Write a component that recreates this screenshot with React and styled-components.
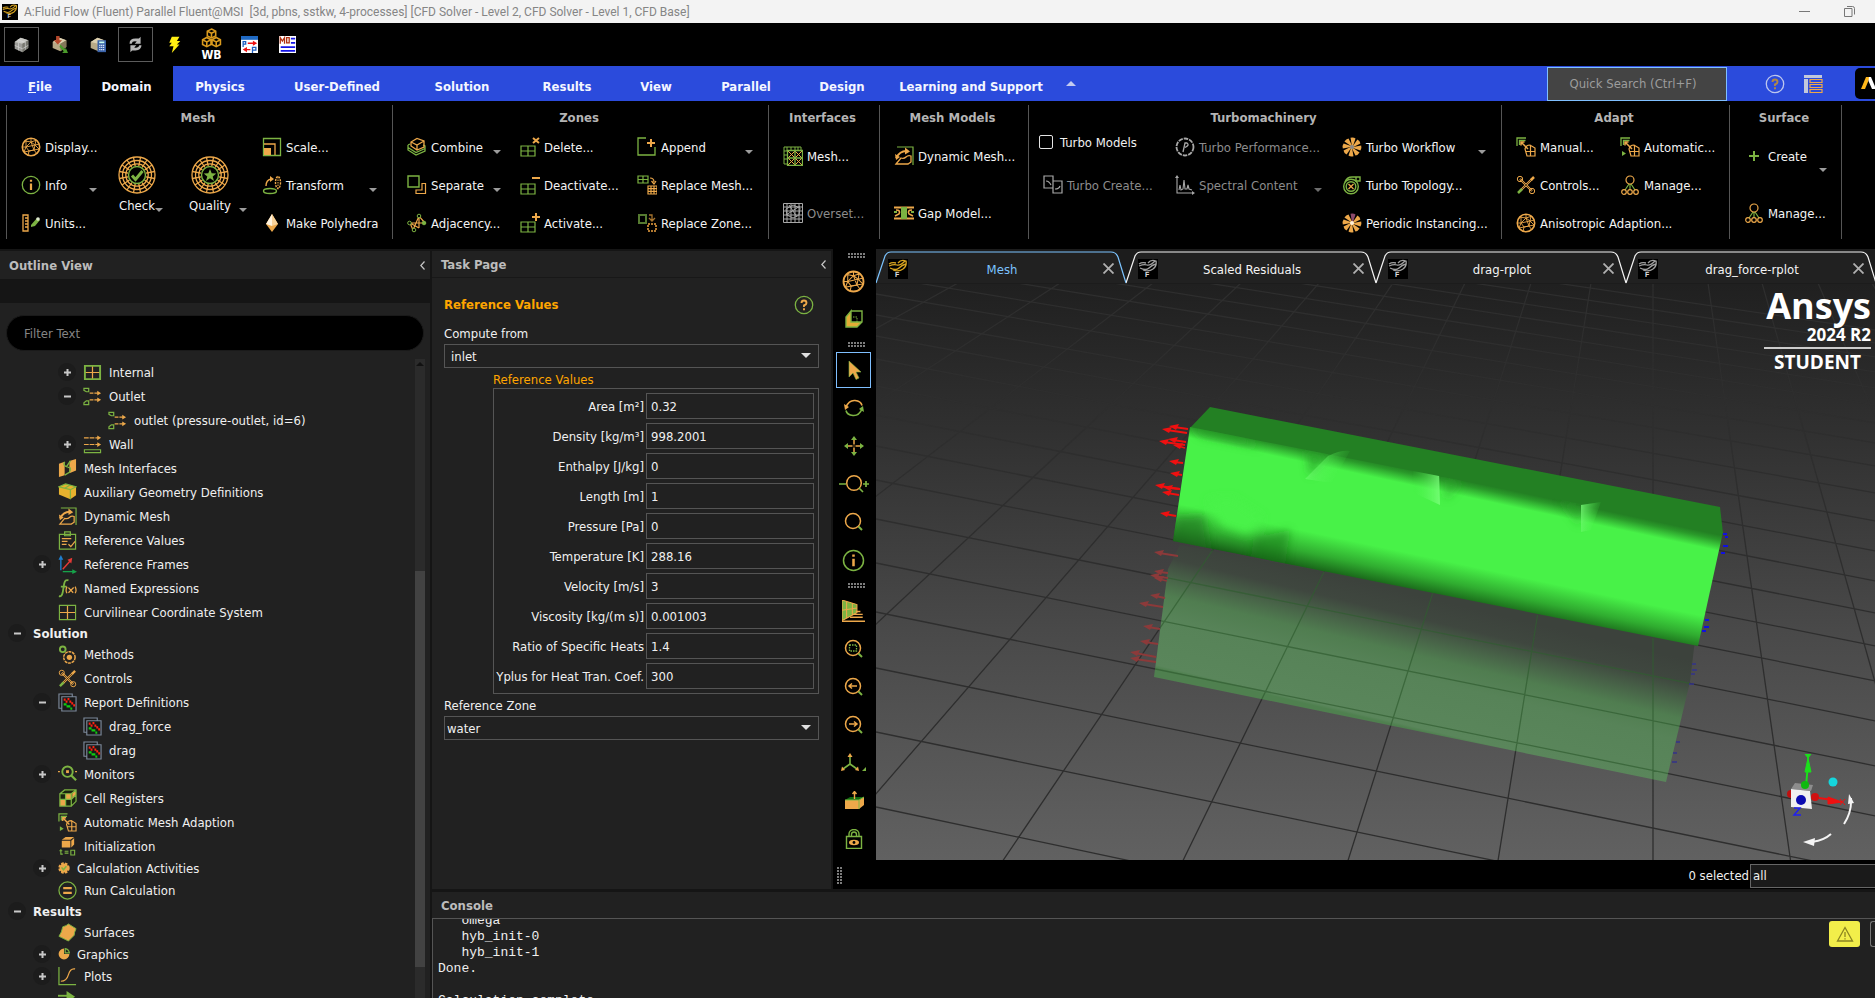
import React from "react";
import styled, { createGlobalStyle } from "styled-components";

const O = "#eda84a";
const G = "#7cb342";
const GREY = "#a8a8a8";
const UI_FONT = '"DejaVu Sans Condensed", "Noto Sans", sans-serif';

const GlobalStyle = createGlobalStyle`
  *, *::before, *::after { box-sizing: border-box; }
  html, body { margin: 0; background: #151515; }
  body { font-family: ${UI_FONT}; font-size: 13px; color: #f0f0f0; }
  button, input, select { font: inherit; color: inherit; margin: 0; }
  button { background: none; border: 0; padding: 0; text-align: left; }
`;

/* ---------- icons ---------- */

const spokes = (cx, cy, r1, r2, n, off = 0) =>
  Array.from({ length: n }, (_, i) => {
    const a = ((i + off) * 2 * Math.PI) / n;
    return `M${(cx + r1 * Math.cos(a)).toFixed(1)} ${(cy + r1 * Math.sin(a)).toFixed(1)}L${(cx + r2 * Math.cos(a)).toFixed(1)} ${(cy + r2 * Math.sin(a)).toFixed(1)}`;
  }).join("");

const Blades = ({ odd }) => (
  <>
    {Array.from({ length: 8 }, (_, i) => (
      <path
        key={i}
        d="M10 9 L8.500 .8 Q11.500 0 13.500 1.600 L11 9Z"
        fill={odd && i === 0 ? "#8d4a6c" : O}
        transform={`rotate(${i * 45} 10 10)`}
      />
    ))}
    <circle cx="10" cy="10" r="2" fill={odd ? "#fff0d8" : "#8a8a8a"} />
  </>
);

const Web = ({ children }) => (
  <>
    <g stroke={O} strokeWidth="1.300" fill="none">
      <circle cx="19" cy="19" r="18" />
      <circle cx="19" cy="19" r="14.500" />
      <circle cx="19" cy="19" r="11.200" />
      <path d={spokes(19, 19, 9, 18, 16, 0.5)} />
    </g>
    <circle cx="19" cy="19" r="8.500" fill="#000" stroke={G} strokeWidth="1.400" />
    {children}
  </>
);

const Grid4 = ({ x, y, w, h, c = G }) => (
  <path
    d={`M${x} ${y}h${w}v${h}h${-w}zM${x + w / 2} ${y}v${h}M${x} ${y + h / 2}h${w}`}
    stroke={c}
    strokeWidth="1.200"
    fill="none"
  />
);

const Lens = ({ children }) => (
  <>
    <circle cx="9" cy="9" r="7.500" stroke={O} strokeWidth="1.500" fill="none" />
    <path d="M14.500 14.500L18 18" stroke={G} strokeWidth="2" />
    {children}
  </>
);

const Flow = () => (
  <>
    <path d="M1 1.500h5v3.500h-2.500l-2.500-1.500zM1 18.500h5v-4h-2.500l-2.500 2z" stroke={G} fill="none" strokeWidth="1.300" />
    <path d="M7 6.500h9M7 13.500h9" stroke={O} strokeDasharray="4 1" strokeWidth="1.300" />
    <path d="M15 4l4 2.500-4 2.500zM15 11l4 2.500-4 2.500z" fill={O} />
  </>
);

const Adapt = ({ play }) => (
  <>
    <path d="M1 9V1h9M3.500 8V3.500h6" stroke={G} strokeWidth="1.300" fill="none" />
    <path d="M5 5l7 7M5 8.500V5h3.500" stroke={O} strokeWidth="1.500" fill="none" />
    <path d="M9 12q1-4 5-4l5 3v8H11zM14.500 8v11M10 14.500h9" stroke={O} strokeWidth="1.200" fill="none" />
    {play && <path d="M2 14l4 2.500-4 2.500z" fill={G} />}
  </>
);

const Tools = () => (
  <>
    <path d="M4 4l12 12M16 4L4 16" stroke={O} strokeWidth="2.200" />
    <path d="M4 4l12 12M16 4L4 16" stroke="#2a2012" strokeWidth=".700" />
    <circle cx="4" cy="4" r="2.700" stroke={O} fill="none" />
    <circle cx="16" cy="16" r="2.700" stroke={O} fill="none" />
    <path d="M15 5l3-3" stroke={O} strokeWidth="2.500" />
    <path d="M2 18l4-4" stroke={G} strokeWidth="2.500" />
  </>
);

const Manage = () => (
  <>
    <path d="M9 9l-4 6M10 9v6M11 9l4 6" stroke={G} strokeWidth="1.200" />
    <g stroke={O} fill="none" strokeWidth="1.200">
      <circle cx="10" cy="5" r="4" />
      <circle cx="4" cy="17" r="2.300" />
      <circle cx="10" cy="17" r="2.300" />
      <circle cx="16" cy="17" r="2.300" />
    </g>
  </>
);

const DynMesh = () => (
  <>
    <path d="M3 1h16v18" stroke={G} strokeWidth="1.200" fill="none" />
    <path d="M2 12q4-7 10-7" stroke={O} strokeWidth="2" fill="none" />
    <path d="M11 1.500l5 4-5 3zM1 8l1 6 4-3z" fill={O} />
    <path d="M2 18l5-6q3 1 5-1t5-1v6l-3 2z" stroke={O} strokeWidth="1.300" fill="none" />
  </>
);

const Report = () => (
  <>
    <path d="M4 16H1V1h14v3M4 4h15v15H4z" stroke="#7d8a9c" strokeWidth="1.200" fill="#191919" />
    <path d="M6 7h2M8 9h2M10 6.500h2M12 9h2M14 11h2M16 13h2" stroke="#ff2211" strokeWidth="2.300" />
    <path d="M6 12h3M9 14h4M13 16.500h2" stroke="#11cc11" strokeWidth="2.300" />
  </>
);

const Sphere = () => (
  <g stroke={O} fill="none" strokeWidth=".900">
    <circle cx="10" cy="10" r="8.700" strokeWidth="1.600" />
    <path d="M10 5l4 3-1 5-5 1-3-4z" />
    <path d="M10 5V1M14 8l4.500-1M13 13l3 4M8 14l-1 4.500M5 10H1.500M10 5L4 4M5 10l0-6M10 5l6-2M14 8l1-5M14 8L5 10M10 5l3 8M8 14l5-1 5.500-1M14 8l4 4M5 10l-2 5 5-1" />
  </g>
);

const Info = () => (
  <>
    <circle cx="10" cy="10" r="8.700" stroke={G} strokeWidth="1.300" fill="none" />
    <path d="M10 4.800v2M10 8.500v6.500" stroke={O} strokeWidth="2.200" />
  </>
);

const Logo = ({ c = "#d9a520" }) => (
  <>
    <rect width="20" height="20" fill="#000" />
    <path d="M1 7q5-2 8-1t8-4M2 9q6 3 9 0t7-4M5 11q6 2 10-1t3-8Q13 0 10 4M1 5q3-2 7-1" stroke={c} strokeWidth="1.300" fill="none" />
    <text x="7" y="18" fontSize="7" fontWeight="700" fill="#ddd" fontFamily="Liberation Sans, sans-serif">F</text>
  </>
);

const Solid = () => (
  <>
    <path d="M2 7l7-5 9 3v9l-7 5-9-4z" fill="#9c9c98" />
    <path d="M2 7l7-5 9 3-7 4z" fill="#c9c9c5" />
    <path d="M11 9l7-4v9l-7 5z" fill="#77776f" />
    <path d="M2 11l9 4 7-4M6.500 8v9M14.500 7v9M5.500 4.500l9 3" stroke="#ddd" strokeWidth=".700" fill="none" />
  </>
);

const Beige = () => (
  <>
    <path d="M2 7l8-5 8 3v8l-7 5-9-4z" fill="#b8a987" />
    <path d="M2 7l8-5 8 3-7 4z" fill="#ddd0b0" />
    <path d="M11 9l7-4v8l-7 5z" fill="#85775a" />
  </>
);

const ICONS = {
  solid: <Solid />,
  importMesh: (
    <>
      <Beige />
      <path d="M6 0h4v5h3l-5 5-5-5h3z" fill="#b5482c" />
      <path d="M11 10l6 6v-3l3 7h-7l2-2-5-5z" fill="#4a9a2a" />
    </>
  ),
  calcMesh: (
    <>
      <Beige />
      <rect x="10" y="5" width="10" height="14" fill="#3a62a8" />
      <path d="M12 7.500h6" stroke="#cfe" strokeWidth="2" />
      <path d="M12 11h6M12 13.500h6M12 16h6" stroke="#dde8ff" strokeWidth="1.500" strokeDasharray="1.500 .700" />
    </>
  ),
  sync: (
    <g fill="#b8b8b8">
      <path d="M3 9q0-6 7-6h4l2-2v8H9l2.500-2.500Q6 5.500 5.500 9z" />
      <path d="M17 11q0 6-7 6H6l-2 2v-8h7l-2.500 2.500q5.500 1 6-2.500z" />
    </g>
  ),
  bolt: <path d="M8 1h9l-3 5h4l-4 4h3L8 20l2-8H5l3-4H5z" fill="#ffee12" />,
  params: (
    <>
      <rect width="20" height="20" fill="#fff" />
      <rect width="20" height="4.500" fill="#1f6ac4" />
      <path d="M2.500 13V6.500h3v3h-3M13.500 20v-6.500h4v3h-4" stroke="#1d5ec0" strokeWidth="1.500" fill="none" />
      <path d="M8 8.500h7M5 16h6" stroke="#e11" strokeWidth="1.600" />
      <path d="M14 5.500l5 3-5 3zM7 13l-5 3 5 3z" fill="#e11" />
    </>
  ),
  monitor: (
    <>
      <rect width="20" height="20" fill="#fff" />
      <path d="M1.500 9V2l2.500 4 2.500-4v7M9 2h3v6H9z" stroke="#b03010" strokeWidth="1.500" fill="none" />
      <path d="M14 3h5M14 8h5M2 13h17M2 17.500h17" stroke="#1414e6" strokeWidth="2" />
    </>
  ),
  hex: (
    <g stroke="#d99a1e" strokeWidth="1.500" fill="none">
      <path d="M10 1l4 2v4.500l-4 2-4-2V3zM5.500 9l4 2.200v4.500l-4 2-4-2v-4.500zM14.500 9l4 2.200v4.500l-4 2-4-2v-4.500z" />
      <path d="M6 3l4 2 4-2M10 5v4M1.500 11.200l4 2 4-2M5.500 13.500v4M10.500 11.200l4 2 4-2M14.500 13.500v4" />
    </g>
  ),
  sphere: <Sphere />,
  info: <Info />,
  units: (
    <>
      <path d="M2 2h5v16H2zM4 5h3M4 8h3M4 11h3M4 14h3" stroke={O} strokeWidth="1.300" fill="none" />
      <path d="M10 12l6-7 3 2-5 6-4 1z" fill={G} />
      <circle cx="17" cy="6" r="1.800" fill="#dfe8d0" />
    </>
  ),
  check: (
    <Web>
      <path d="M14 19.500l3.500 4 7-8.500" stroke={G} strokeWidth="3" fill="none" />
    </Web>
  ),
  quality: (
    <Web>
      <path d="M19 13l1.700 4.300 4.600.2-3.600 2.900 1.300 4.500-4-2.600-4 2.600 1.300-4.500-3.600-2.900 4.600-.2z" fill={G} />
    </Web>
  ),
  scale: (
    <>
      <path d="M1.500 1.500h17v17h-17z" stroke={G} strokeWidth="1.300" fill="none" />
      <path d="M2 7h11v11" stroke={O} strokeWidth="1.300" fill="none" />
      <path d="M2 11h7v7H2z" fill={O} />
    </>
  ),
  transform: (
    <>
      <ellipse cx="8" cy="16" rx="6.500" ry="2.500" stroke={G} strokeWidth="1.400" fill="none" />
      <path d="M4 11q0-6 5-7" stroke={O} strokeWidth="1.400" fill="none" />
      <path d="M8 1l4 3-4 3z" fill={O} />
      <ellipse cx="16" cy="7.500" rx="2.500" ry="6" stroke={O} strokeWidth="1.400" strokeDasharray="2 1" fill="none" />
      <path d="M16 2v11" stroke={O} strokeDasharray="1.500 1" />
    </>
  ),
  poly: (
    <>
      <path d="M10 1l6 10-6 8-6-8z" fill={O} />
      <path d="M10 1v12l-6-2z" fill="#fff3df" />
      <path d="M10 1l6 10-6 2z" fill="#f8d29a" />
    </>
  ),
  combine: (
    <>
      <path d="M1 8v5l8 5 9-4V9l-2-1M1 8l2-1M1 10.500l8 5 9-4" stroke={G} strokeWidth="1.300" fill="none" />
      <path d="M4 5l6-3.500L17 4v6l-7 3-6-4zM4 5l6 3 7-4M10 8v5" stroke={O} strokeWidth="1.300" fill="none" />
    </>
  ),
  separate: (
    <>
      <path d="M1 1h11v11H1z" stroke={G} strokeWidth="1.400" fill="none" />
      <path d="M15 8.500h3.500v10H9V15h6z" stroke={O} strokeWidth="1.200" fill="none" />
    </>
  ),
  adjacency: (
    <>
      <path d="M3 10h15L12 3 6 17zM12 3l0 12M3 10l9 5" stroke={O} strokeWidth="1.200" fill="none" />
      <g fill="#000" stroke={G}>
        <circle cx="2.500" cy="10" r="1.800" />
        <circle cx="12" cy="3" r="1.800" />
        <circle cx="7" cy="17" r="1.800" />
        <circle cx="17" cy="10" r="1.800" fill={G} />
      </g>
    </>
  ),
  del: (
    <>
      <Grid4 x={1} y={9} w={14} h={10} />
      <path d="M13 1l6 5M19 1l-6 5" stroke={O} strokeWidth="2" />
    </>
  ),
  deact: (
    <>
      <Grid4 x={1} y={9} w={14} h={10} />
      <path d="M12 3h8" stroke={O} strokeWidth="2" />
    </>
  ),
  act: (
    <>
      <Grid4 x={1} y={9} w={14} h={10} />
      <path d="M12 4h8M16 0v8" stroke={O} strokeWidth="2" />
    </>
  ),
  append: (
    <>
      <path d="M9 1H1v17h17V10" stroke={G} strokeWidth="1.300" fill="none" />
      <path d="M10 6h8M14 2v8" stroke={O} strokeWidth="2" />
    </>
  ),
  replaceMesh: (
    <>
      <Grid4 x={1} y={1} w={10} h={7} />
      <path d="M11 11h9v8h-9zM14 11v8M17 11v8M11 13.700h9M11 16.400h9M13 3q4 0 4 4M14.500 6l2.500 3 2-3" stroke={O} strokeWidth="1.200" fill="none" />
    </>
  ),
  replaceZone: (
    <>
      <path d="M2 2h7v8H2z" stroke="#557a30" strokeWidth="2" fill="none" />
      <path d="M11 11h8v7h-8z" stroke="#b37a30" strokeWidth="2" strokeDasharray="2 1" fill="none" />
      <path d="M12 2h3v5M12 5l3 3 3-3" stroke="#a5732e" strokeWidth="1.300" fill="none" />
    </>
  ),
  iface: (
    <>
      <path d="M1 1h17v4M1 1v17h4M4 1v4M8 1v3M12 1v3M15 1v3M1 5h4M1 9h3M1 13h3" stroke={G} fill="none" />
      <path d="M5 5l14 14M19 5L5 19M5 12l7-7 7 7-7 7z" stroke={O} fill="none" />
      <path d="M4.500 4.500h15v15h-15zM12 4v16M4 12h16" stroke={G} strokeWidth="1.300" fill="none" />
    </>
  ),
  overset: (
    <g stroke={GREY} fill="none">
      <path d="M.5 .5h19v19H.5zM4 0v20M8 0v20M12 0v20M16 0v20M0 4h20M0 8h20M0 12h20M0 16h20" />
      <path d="M3 6l7-4 7 3-1 7-6 3-6-3zM6 2l8 12M3 12L17 3" />
    </g>
  ),
  dynmesh: <DynMesh />,
  gap: (
    <>
      <path d="M0 4.500h20M0 15.500h20" stroke={O} strokeWidth="2" />
      <path d="M2 7q5 0 3 4l-4 2M18 7q-5 0-3 4l4 2" stroke={O} strokeWidth="1.600" fill="none" />
      <path d="M7 4h6v12H7z" fill={G} />
      <path d="M0 9h3M17 9h3" stroke={G} strokeWidth="2" />
    </>
  ),
  turboCreate: (
    <g stroke={GREY} strokeWidth="1.200" fill="none">
      <path d="M1 1h9v12H1zM10 6h9v12h-9z" />
      <path d="M3 6q3 0 5 4M12 14q4 0 5-3" />
    </g>
  ),
  perf: (
    <>
      <circle cx="10" cy="10" r="8.500" stroke={GREY} strokeWidth="1.800" fill="none" strokeDasharray="4.500 1" />
      <path d="M8 15l2-9h2q3 2-2 4.500" stroke={GREY} strokeWidth="1.300" fill="none" />
    </>
  ),
  spectral: (
    <>
      <path d="M2 2v16h16M4 15l1-5 1 5 2-1 1-9 1 9 2 0 1-4 1 4 3 1" stroke={GREY} strokeWidth="1.100" fill="none" />
      <path d="M0 3l2-3 2 3zM17 16l3 2-3 2z" fill={GREY} />
    </>
  ),
  fan: <Blades />,
  fanOdd: <Blades odd />,
  topology: (
    <>
      <g stroke={G} strokeWidth="1.400" fill="none">
        <circle cx="9" cy="11.500" r="7.300" />
        <circle cx="9" cy="11.500" r="4.800" />
        <path d="M3 7q2-5 7-5h8v4h-5M14 2v4" />
      </g>
      <path d="M6.500 9l5 5M11.500 9l-5 5" stroke={O} strokeWidth="1.300" />
    </>
  ),
  adapt: <Adapt />,
  adaptAuto: <Adapt play />,
  tools: <Tools />,
  manage: <Manage />,
  plus: <path d="M5 10h10M10 5v10" stroke={G} strokeWidth="2" />,
  help: (
    <>
      <circle cx="10" cy="10" r="8.700" stroke={G} strokeWidth="1.300" fill="none" />
      <path d="M7.500 8q0-2.500 2.500-2.500T12.500 8Q12.500 9.500 10 10.500v1.500M10 13.300v2" stroke={O} strokeWidth="1.900" fill="none" />
    </>
  ),
  helpBar: (
    <>
      <circle cx="10" cy="10" r="8.700" stroke="#bcc6ee" strokeWidth="1.300" fill="none" />
      <path d="M7.500 8q0-2.500 2.500-2.500T12.500 8Q12.500 9.500 10 10.500v1.500M10 13.300v2" stroke="#b08846" strokeWidth="1.900" fill="none" />
    </>
  ),
  layout: (
    <>
      <path d="M1 1h18v3H1zM1 5h4v14H1z" fill="#c2c8dc" />
      <path d="M7 5.500h12v3H7zM7 10.500h12v3H7zM7 15.500h12v3H7z" stroke={O} strokeWidth="1.200" fill="none" />
    </>
  ),
  internal: (
    <>
      <path d="M10 2v16M2 10h16" stroke={O} strokeWidth="1.300" />
      <path d="M2 3h16v14H2z" stroke={G} strokeWidth="2" fill="none" />
    </>
  ),
  flow: <Flow />,
  wall: (
    <>
      <path d="M1 3h15M1 10h15" stroke={O} strokeWidth="1.300" strokeDasharray="5 1" />
      <path d="M15 .500l4 2.500-4 2.500zM15 7.500l4 2.500-4 2.500z" fill={O} />
      <path d="M1.500 15.500h17v3h-17z" stroke={G} strokeWidth="1.200" fill="none" />
    </>
  ),
  meshIf: (
    <>
      <path d="M1 5l6-2v14l-6 2zM12 2l7-2v12l-7 3z" fill={O} />
      <path d="M7 3q-2 4 2 5l4-6M7 17l5-3q3-6-2-5" stroke={G} strokeWidth="1.500" fill="none" />
    </>
  ),
  aux: (
    <>
      <path d="M1 4l7-3 11 3v9l-6 4L1 12z" fill="#e8b22e" />
      <path d="M1 4l7-3 11 3-6 3zM13 7v10M7 5.500l6-3.500" stroke={G} strokeWidth="1.200" fill="none" />
    </>
  ),
  refVal: (
    <>
      <path d="M1.500 3.500h17v15.500h-17zM7 1h6v4H7z" stroke={G} strokeWidth="1.300" fill="none" />
      <path d="M4 8h10M4 11h6M4 14h5M11 14l2.500 2.500L18 11" stroke={O} strokeWidth="1.300" fill="none" />
    </>
  ),
  frames: (
    <>
      <path d="M3 16V4" stroke="#1f7fd0" strokeWidth="1.400" />
      <path d="M.5 5L3 0l2.500 5z" fill="#1f7fd0" />
      <path d="M5 15l8-9" stroke="#e53935" strokeWidth="1.500" />
      <path d="M15 3l-1 6-4-4z" fill="#e53935" />
      <path d="M5 17.500h12" stroke="#16a34a" strokeWidth="1.400" />
      <path d="M15 15l5 2.500-5 2.500z" fill="#16a34a" />
    </>
  ),
  fx: (
    <>
      <path d="M1 18q3 1 4-4l1.500-9Q7.500 0 11 1.500M3 8h6" stroke={G} strokeWidth="1.900" fill="none" />
      <path d="M9.500 8q-2 4 0 7M18 8q2 4 0 7M11 9l5 5.500M16.500 9l-5.500 5.500" stroke={O} strokeWidth="1.300" fill="none" />
    </>
  ),
  curvi: (
    <>
      <path d="M10 2v16M2 10h16" stroke={O} strokeWidth="1.300" />
      <path d="M1.500 2.500h17v15h-17z" stroke={G} strokeWidth="1.200" fill="none" />
    </>
  ),
  gears: (
    <>
      <circle cx="5" cy="4.500" r="3" stroke={G} strokeWidth="2" fill="none" />
      <circle cx="12" cy="13" r="6" stroke={O} strokeWidth="1.600" strokeDasharray="3 .800" fill="none" />
      <circle cx="12" cy="13" r="2.800" fill={O} />
    </>
  ),
  report: <Report />,
  monitors: (
    <>
      <path d="M0 7h2M18 7h2" stroke={O} strokeWidth="1.500" />
      <circle cx="10" cy="7" r="5.500" stroke={G} strokeWidth="2" fill="none" />
      <path d="M8.500 5.500h3v3h-3z" fill={O} />
      <path d="M14 11l5 5" stroke={G} strokeWidth="2.400" />
    </>
  ),
  cells: (
    <>
      <path d="M2 5l5-4h12v12l-5 5H2z" fill="#1a2410" />
      <path d="M8 5h6v6H8zM2 11h6v7H2zM15 4l4-3v6l-4 3z" fill={O} />
      <path d="M2 5h12v13H2zM2 5l5-4h12v12l-5 5M14 5l5-4M8 5v13M2 11h12l5-5" stroke={G} strokeWidth="1.300" fill="none" />
    </>
  ),
  init: (
    <>
      <path d="M4 3l4-3h9l-4 3zM4 4h9v7H4zM14 4l3-3v7l-3 3z" fill={O} />
      <path d="M3 13v5h2M1.500 14.500h3M7 15h4M7 17h4M13.500 14h4v5h-4z" stroke={G} strokeWidth="1.200" fill="none" />
    </>
  ),
  activity: (
    <>
      <circle cx="10" cy="10" r="7.500" fill={O} stroke={O} strokeWidth="4" strokeDasharray="4 2" />
      <path d="M6 9l3 4 5-6" stroke={G} strokeWidth="2.500" fill="none" />
    </>
  ),
  run: (
    <>
      <circle cx="10" cy="10" r="9" stroke={G} strokeWidth="1.300" fill="none" />
      <path d="M5.500 7.500h9M5.500 12.500h9" stroke={O} strokeWidth="2.200" />
    </>
  ),
  surface: <path d="M5 4q4-1 6-3l8 5q-2 4-2 7l-6 6-10-5q3-4 4-10z" fill={O} stroke={G} />,
  pie: (
    <>
      <path d="M10 10V1a9 9 0 1 0 9 9z" fill={O} />
      <path d="M12 8V1q6 1 7 7z" stroke={G} strokeWidth="2" fill="none" />
    </>
  ),
  plots: (
    <>
      <path d="M1 0v18.500h18" stroke={G} strokeWidth="1.300" fill="none" />
      <path d="M3 15q6 0 8-7t7-6" stroke={O} strokeWidth="1.300" fill="none" />
    </>
  ),
  anim: (
    <>
      <path d="M0 5h10" stroke={G} strokeWidth="2" />
      <path d="M9 0l9 6-9 6z" fill={G} />
    </>
  ),
  cube: (
    <>
      <path d="M2 8l5-6v11l-5 5zM2 18l5-5h11l-5 5z" fill="#e3ac35" />
      <path d="M7 2h11v11l-5 5H2V8l5-6v11h11" stroke={G} strokeWidth="1.400" fill="none" />
      <path d="M9 8h4v5" stroke={G} strokeDasharray="1.500 1" fill="none" />
    </>
  ),
  cursor: <path d="M5 1v16l4-4 3 6.500 3-1.500L12 12h5z" fill={O} stroke={G} strokeWidth=".600" />,
  rotate: (
    <>
      <path d="M2 9q3-7 9-6.500t7 5" stroke={O} strokeWidth="1.600" fill="none" />
      <path d="M0 6l5 3-4 3z" fill={O} />
      <path d="M18 11q-3 7-9 6.500t-7-5" stroke={G} strokeWidth="1.600" fill="none" />
      <path d="M20 14l-5-3 4-3z" fill={G} />
    </>
  ),
  pan: (
    <>
      <path d="M3 10h14M10 3v14" stroke={O} strokeWidth="1.500" />
      <path d="M0 10l4-3v6zM20 10l-4-3v6zM10 0l-3 4h6zM10 20l-3-4h6z" fill={G} />
      <path d="M8 10h4M10 8v4" stroke="#000" />
    </>
  ),
  zoomPm: (
    <>
      <circle cx="15" cy="9" r="7.300" stroke={O} strokeWidth="1.500" fill="none" />
      <path d="M20 14l4 4M0 10h7M24 10h6M27 7v6" stroke={G} strokeWidth="1.700" />
    </>
  ),
  lens: <Lens />,
  lensBox: (
    <Lens>
      <path d="M5.500 6h7v6h-7z" stroke={G} strokeWidth="1.300" strokeDasharray="1.500 1" fill="none" />
    </Lens>
  ),
  lensLeft: (
    <Lens>
      <path d="M5 9h8M8 6.500L5 9l3 2.500" stroke={O} strokeWidth="1.500" fill="none" />
    </Lens>
  ),
  lensRight: (
    <Lens>
      <path d="M5 9h8M10 6.500L13 9l-3 2.500" stroke={O} strokeWidth="1.500" fill="none" />
    </Lens>
  ),
  plane: (
    <>
      <path d="M0 0l13 4v7L0 18z" fill={G} />
      <path d="M0 0l13 4v7L0 18zM4 1v15M9 3v10M0 9l13-2" stroke={O} strokeWidth=".900" fill="none" />
      <path d="M12 10h4M10 12.500h8M7 15h11M0 18.500h20" stroke={O} strokeWidth="1.200" fill="none" />
    </>
  ),
  triad: (
    <>
      <path d="M9 3v8l-7 5M9 11l7 5" stroke={G} strokeWidth="1.600" fill="none" />
      <path d="M9 0l-2.500 4h5zM0 18l1-4.500 3 3.500zM18 18l-1-4.500-3 3.500z" fill={O} />
      <path d="M25 14v4h-4z" fill={G} />
    </>
  ),
  box: (
    <>
      <path d="M1 9l5-3h14l-5 3z" fill="#0f6a10" />
      <path d="M1 9h14v9H1zM15 9l5-3v8l-5 4z" fill={O} />
      <path d="M1 9h14v9M15 9l5-3" stroke={G} fill="none" />
      <path d="M10.500 8V1M8.500 3l2-2.500 2 2.500" stroke={O} strokeWidth="1.400" fill="none" />
    </>
  ),
  lock: (
    <>
      <path d="M5 7V5a5 4.500 0 0 1 10 0v2M7.500 7V5.500a2.500 2.500 0 0 1 5 0V7M2.500 7.500h15v12h-15z" stroke={G} strokeWidth="1.400" fill="none" />
      <ellipse cx="10" cy="13.500" rx="5" ry="2.700" fill={O} />
      <circle cx="10" cy="13.500" r="1.400" fill="#000" />
    </>
  ),
  logo: <Logo />,
  logoGrey: <Logo c="#a0a0a0" />,
};

const WIDE = { check: "0 0 38 38", quality: "0 0 38 38", zoomPm: "0 0 30 20", triad: "0 0 26 20" };

const Svg = styled.svg`
  display: block;
  flex: none;
  width: ${(p) => p.$w}px;
  height: ${(p) => p.$h}px;
`;

const Icon = ({ name, w = 20, h = w }) => (
  <Svg $w={w} $h={h} viewBox={WIDE[name] || "0 0 20 20"} aria-hidden="true">
    {ICONS[name]}
  </Svg>
);

const Arrow = styled.span`
  flex: none;
  width: 0;
  height: 0;
  margin: ${(p) => p.$m || "10px 0 0 auto"};
  border: 4px solid transparent;
  border-top-color: ${(p) => p.$c || "#9c9c9c"};
  border-bottom: 0;
`;

/* ---------- shell ---------- */

const Shell = styled.div`
  display: flex;
  flex-direction: column;
  height: 100vh;
  overflow: hidden;
  background: #151515;
`;

const TitleBar = styled.header`
  display: flex;
  align-items: center;
  flex: none;
  height: 23px;
  padding: 0 20px 0 2px;
  gap: 6px;
  background: #f3f3f3;
  color: #858585;
  font-family: Roboto, "Noto Sans", sans-serif;
  font-size: 12px;
  white-space: pre;
`;

const WindowButtons = styled.div`
  display: flex;
  gap: 34px;
  margin-left: auto;
`;

const QuickBar = styled.div`
  display: flex;
  align-items: center;
  flex: none;
  gap: 3px;
  height: 43px;
  padding: 0 5px 0 4px;
  background: #000;
`;

const QuickButton = styled.button`
  display: flex;
  flex-direction: column;
  align-items: center;
  justify-content: center;
  width: 35px;
  height: 35px;
  border: 1px solid ${(p) => (p.$on ? "#5c5c5c" : "transparent")};
  font-size: 12px;
  line-height: 12px;
  font-weight: 700;
  color: #fff;
`;

const TabBar = styled.nav`
  display: flex;
  flex: none;
  height: 35px;
  background: #2b4bdc;
`;

const MenuTab = styled.button`
  width: ${(p) => p.$w}px;
  padding-top: 5px;
  text-align: center;
  white-space: nowrap;
  font-weight: 700;
  color: #f4f6ff;
  background: ${(p) => (p.$on ? "#000" : "transparent")};
`;

const CollapseRibbon = styled.button`
  align-self: flex-start;
  margin: 15px 0 0 11px;
  border: 5px solid transparent;
  border-bottom-color: #c3cbf0;
  border-top: 0;
`;

const BarRight = styled.div`
  display: flex;
  align-items: center;
  margin-left: auto;
`;

const Search = styled.input`
  width: 180px;
  height: 34px;
  margin-right: 38px;
  padding: 0 8px 0 0;
  border: 1px solid #7fbfff;
  border-radius: 0;
  background: #444;
  text-align: center;
  &::placeholder { color: #9c9c9c; }
`;

const BarIcon = styled.button`
  margin-right: ${(p) => p.$gap}px;
`;

const AnsysBadge = styled.button`
  width: 20px;
  height: 31px;
  border-radius: 5px 0 0 5px;
  background: #000;
`;

/* ---------- ribbon ---------- */

const Ribbon = styled.div`
  display: flex;
  flex: none;
  height: 148px;
  padding: 4px 0 10px 6px;
  background: #000;
`;

const Group = styled.section`
  flex: none;
  width: ${(p) => p.$w}px;
  border-left: 1px solid #555;
`;

const GroupTitle = styled.h2`
  margin: 0;
  padding-right: 3px;
  height: 28px;
  line-height: 26px;
  text-align: center;
  font-size: 13px;
  font-weight: 700;
  color: #b4b4b4;
`;

const Columns = styled.div`
  display: flex;
  align-items: flex-start;
  gap: ${(p) => p.$gap || 0}px;
  padding-left: ${(p) => p.$pad || 14}px;
`;

const Column = styled.div`
  display: flex;
  flex-direction: column;
  width: ${(p) => p.$w}px;
  gap: ${(p) => p.$gap || 10}px;
  padding-top: ${(p) => p.$top || 0}px;
`;

const Cmd = styled.button`
  display: flex;
  align-items: center;
  flex: none;
  gap: 4px;
  height: 28px;
  white-space: nowrap;
  color: #f4f4f4;
  &:disabled { color: #8c8c8c; }
`;

const BigCmd = styled.button`
  display: flex;
  flex-direction: column;
  align-items: center;
  gap: 3px;
  padding-top: 23px;
  color: #f4f4f4;
`;

const BigLabel = styled.span`
  display: flex;
  align-items: center;
  padding-left: ${(p) => p.$pad}px;
  line-height: 18px;
`;

const Tick = styled.label`
  display: flex;
  align-items: center;
  gap: 7px;
  height: 28px;
  margin: -5px 0 5px -4px;
  white-space: nowrap;
  input {
    appearance: none;
    width: 14px;
    height: 14px;
    border: 1px solid #e4e4e4;
    border-radius: 2px;
  }
`;

const Command = ({ icon, label, arrow, disabled }) => (
  <Cmd disabled={disabled}>
    <Icon name={icon} />
    {label}
    {arrow && <Arrow $c={disabled ? "#6e6e6e" : undefined} />}
  </Cmd>
);

const Big = ({ icon, label, gap }) => (
  <BigCmd>
    <Icon name={icon} w={38} />
    <BigLabel $pad={gap + 8}>
      {label}
      <Arrow $m={`8px 0 0 ${gap}px`} />
    </BigLabel>
  </BigCmd>
);

/* ---------- panels ---------- */

const Work = styled.main`
  display: flex;
  flex: 1;
  min-height: 0;
  gap: 2px;
  padding-top: 2px;
`;

const Outline = styled.aside`
  display: flex;
  flex-direction: column;
  flex: none;
  width: 430px;
  background: #212121;
`;

const PanelHead = styled.div`
  display: flex;
  flex: none;
  align-items: center;
  justify-content: space-between;
  height: ${(p) => p.$h}px;
  padding: 0 5px 0 9px;
  font-weight: 700;
  color: #bcbcbc;
`;

const Chevron = () => (
  <button aria-label="Collapse panel">
    <Svg $w={5} $h={9} viewBox="0 0 5 9">
      <path d="M4.500 .5L.8 4.500l3.700 4" stroke="#c8c8c8" strokeWidth="1.200" fill="none" />
    </Svg>
  </button>
);

const Band = styled.div`
  flex: none;
  height: 24px;
  background: #151515;
`;

const FilterInput = styled.input`
  flex: none;
  height: 36px;
  margin: 12px 6px 8px;
  padding: 0 17px;
  border: 1px solid #1a1a1a;
  border-radius: 18px;
  background: #000;
  &::placeholder { color: #858585; }
`;

const TreeArea = styled.div`
  display: flex;
  flex: 1;
  min-height: 0;
  padding-right: 5px;
`;

const Tree = styled.ul`
  flex: 1;
  margin: 0;
  padding: 1px 0 0;
  list-style: none;
  overflow: hidden;
`;

const TreeRow = styled.li`
  display: flex;
  align-items: center;
  height: ${(p) => p.$h}px;
  padding-left: ${(p) => 8 + p.$level * 25}px;
  gap: 7px;
  white-space: nowrap;
  font-weight: ${(p) => (p.$head ? 700 : 400)};
  color: #f0f0f0;
`;

const Toggle = styled.button`
  flex: none;
  width: 18px;
  height: 18px;
  border-radius: 9px;
  background: ${(p) => (p.$show ? "#1c1c1c" : "transparent")};
  svg { margin: 0 auto; }
`;

const ScrollTrack = styled.div`
  display: flex;
  flex-direction: column;
  flex: none;
  width: 10px;
  background: #2b2b2b;
`;

const ScrollThumb = styled.div`
  height: 62%;
  margin-top: auto;
  margin-bottom: 31px;
  background: #424242;
`;

const ScrollUp = styled.button`
  margin: 3px 1px 0;
  border: 4px solid transparent;
  border-bottom-color: #111;
  border-top: 0;
`;

const TREE = [
  [2, "+", "internal", "Internal"],
  [2, "-", "flow", "Outlet"],
  [3, "", "flow", "outlet (pressure-outlet, id=6)"],
  [2, "+", "wall", "Wall"],
  [1, "", "meshIf", "Mesh Interfaces"],
  [1, "", "aux", "Auxiliary Geometry Definitions"],
  [1, "", "dynmesh", "Dynamic Mesh"],
  [1, "", "refVal", "Reference Values"],
  [1, "+", "frames", "Reference Frames"],
  [1, "", "fx", "Named Expressions"],
  [1, "", "curvi", "Curvilinear Coordinate System"],
  [0, "-", null, "Solution"],
  [1, "", "gears", "Methods"],
  [1, "", "tools", "Controls"],
  [1, "-", "report", "Report Definitions"],
  [2, "", "report", "drag_force"],
  [2, "", "report", "drag"],
  [1, "+", "monitors", "Monitors"],
  [1, "", "cells", "Cell Registers"],
  [1, "", "adaptAuto", "Automatic Mesh Adaption"],
  [1, "", "init", "Initialization"],
  [1, "+", "activity", "Calculation Activities", true],
  [1, "", "run", "Run Calculation"],
  [0, "-", null, "Results"],
  [1, "", "surface", "Surfaces"],
  [1, "+", "pie", "Graphics", true],
  [1, "+", "plots", "Plots"],
  [1, "", "anim", ""],
];

const RightSide = styled.div`
  display: flex;
  flex-direction: column;
  flex: 1;
  min-width: 0;
`;

const Upper = styled.div`
  display: flex;
  flex: 1;
  min-height: 0;
  margin-bottom: 3px;
`;

const TaskPage = styled.section`
  display: flex;
  flex-direction: column;
  flex: none;
  width: 399px;
  margin-right: 2px;
  background: #212121;
`;

const TaskBody = styled.div`
  display: flex;
  flex-direction: column;
  flex: 1;
  border-top: 1px solid #181818;
  padding: 0 12px;
`;

const TaskTitle = styled.div`
  display: flex;
  align-items: center;
  justify-content: space-between;
  height: 48px;
  padding: 5px 5px 0 0;
  font-weight: 700;
  color: #ffa500;
`;

const FieldLabel = styled.label`
  margin-bottom: 2px;
  line-height: 16px;
  color: #f0f0f0;
`;

const SelectBox = styled.div`
  position: relative;
  display: flex;
  select {
    appearance: none;
    flex: 1;
    height: 24px;
    padding: 0 ${(p) => p.$pad}px;
    border: 1px solid #555;
    border-radius: 0;
    background: #212121;
  }
`;

const SelectArrow = styled.span`
  position: absolute;
  right: 8px;
  top: 9px;
  border: 5px solid transparent;
  border-top-color: #e0e0e0;
  border-bottom: 0;
  pointer-events: none;
`;

const BoxTitle = styled.div`
  margin: 4px 0 0 49px;
  line-height: 16px;
  color: #ffa500;
`;

const ValueBox = styled.div`
  display: flex;
  flex-direction: column;
  gap: 4px;
  margin: 0 0 4px 49px;
  padding: 4px;
  border: 1px solid #555;
`;

const ValueRow = styled.div`
  display: flex;
  align-items: center;
  justify-content: flex-end;
  gap: 2px;
  white-space: nowrap;
  input {
    flex: none;
    width: 168px;
    height: 26px;
    padding: 0 4px;
    border: 1px solid #555;
    border-radius: 0;
    background: #212121;
  }
`;

const VALUES = [
  ["Area [m²]", "0.32"],
  ["Density [kg/m³]", "998.2001"],
  ["Enthalpy [J/kg]", "0"],
  ["Length [m]", "1"],
  ["Pressure [Pa]", "0"],
  ["Temperature [K]", "288.16"],
  ["Velocity [m/s]", "3"],
  ["Viscosity [kg/(m s)]", "0.001003"],
  ["Ratio of Specific Heats", "1.4"],
  ["Yplus for Heat Tran. Coef.", "300"],
];

const Stage = styled.div`
  display: flex;
  flex-direction: column;
  flex: 1;
  min-width: 0;
  margin-top: -2px;
  background: #000;
`;

const StageTop = styled.div`
  display: flex;
  flex: 1;
  min-height: 0;
`;

const ToolStrip = styled.div`
  display: flex;
  flex-direction: column;
  align-items: center;
  flex: none;
  width: 43px;
  padding-right: 2px;
  overflow: hidden;
`;

const ToolButton = styled.button`
  display: flex;
  flex: none;
  align-items: center;
  justify-content: center;
  width: 35px;
  height: 36px;
  margin: 1px 0;
  border: 1px solid ${(p) => (p.$on ? "#7fbfff" : "transparent")};
`;

const Grip = styled.div`
  display: flex;
  flex: none;
  align-items: center;
  justify-content: center;
  width: ${(p) => (p.$v ? 8 : 35)}px;
  height: ${(p) => (p.$v ? 29 : 13)}px;
  padding-left: ${(p) => (p.$v ? 0 : 6)}px;
`;

const GripDots = ({ v }) => (
  <Grip $v={v}>
    <Svg $w={v ? 5 : 17} $h={v ? 17 : 5} viewBox={v ? "0 0 5 17" : "0 0 17 5"}>
      <path
        d={v ? "M1 0v17M4 0v17" : "M0 1h17M0 4h17"}
        stroke="#7c7c7c"
        strokeWidth="2"
        strokeDasharray="2 1"
      />
    </Svg>
  </Grip>
);

const TOOLS = [
  ["grip"], ["sphere", 23], ["cube", 20], ["grip"], ["cursor", 20], ["rotate", 20], ["pan", 20],
  ["zoomPm", 30], ["lens", 20], ["info", 23], ["grip"], ["plane", 23], ["lensBox", 20],
  ["lensLeft", 20], ["lensRight", 20], ["triad", 26], ["box", 20], ["lock", 20],
];

const View = styled.div`
  display: flex;
  flex-direction: column;
  flex: 1;
  min-width: 0;
`;

const ViewTabs = styled.div`
  display: flex;
  flex: none;
  height: 35px;
  overflow: hidden;
  background: #1c1c1c;
`;

const ViewTab = styled.div`
  position: relative;
  display: flex;
  flex: none;
  align-items: center;
  width: 250px;
  padding: 4px 12px 0;
  color: ${(p) => (p.$on ? "#7cc4ff" : "#f4f4f4")};
`;

const TabShape = styled.svg`
  position: absolute;
  left: 0;
  top: 0;
  width: 251px;
  height: 35px;
`;

const TabName = styled.button`
  position: relative;
  flex: 1;
  padding: 2px 7px 0 0;
  text-align: center;
  white-space: nowrap;
`;

const TabIcon = styled.span`
  position: relative;
`;

const CloseTab = styled.button`
  position: relative;
`;

const Canvas = styled.div`
  position: relative;
  flex: 1;
  min-height: 0;
  overflow: hidden;
`;

const Scene = styled.svg`
  display: block;
  width: 100%;
  height: 100%;
`;

const Brand = styled.div`
  position: absolute;
  right: 4px;
  top: 2px;
  width: 107px;
  font-family: "Open Sans", "Noto Sans", sans-serif;
  font-weight: 700;
  color: #fff;
  white-space: nowrap;
`;

const BrandName = styled.div`
  font-size: 36px;
  line-height: 40px;
  text-align: right;
`;

const BrandYear = styled.div`
  padding-bottom: 3px;
  border-bottom: 2px solid #ccc;
  font-size: 17px;
  line-height: 18px;
  text-align: right;
`;

const BrandEdition = styled.div`
  margin-top: 3px;
  font-size: 19px;
  line-height: 20px;
  text-align: center;
`;

const SelectBar = styled.div`
  display: flex;
  align-items: center;
  flex: none;
  height: 29px;
  padding: 2px 0 0 2px;
  label { margin-left: auto; }
  input {
    width: 125px;
    height: 24px;
    margin-left: 1px;
    padding: 0 2px;
    border: 1px solid #666;
    border-right: 0;
    border-radius: 0;
    background: #1a1a1a;
  }
`;

const Console = styled.section`
  position: relative;
  display: flex;
  flex-direction: column;
  flex: none;
  height: 106px;
  background: #212121;
`;

const ConsoleText = styled.div`
  flex: 1;
  overflow: hidden;
  border: 1px solid #555;
  border-width: 1px 0 0 1px;
  padding-left: 5px;
  pre {
    margin: -6px 0 0;
    font-family: "Liberation Mono", monospace;
    font-size: 13px;
    line-height: 16px;
  }
`;

const Alerts = styled.div`
  position: absolute;
  right: 0;
  top: 29px;
  display: flex;
  gap: 10px;
`;

const Warn = styled.button`
  display: flex;
  align-items: center;
  justify-content: center;
  width: 31px;
  height: 26px;
  border-radius: 3px;
  background: #f2ee4a;
`;

const AlertEdge = styled.button`
  width: 5px;
  height: 26px;
  border: 1px solid #777;
  border-right: 0;
  border-radius: 3px 0 0 3px;
`;

/* ---------- 3D scene ---------- */

const VPX = 1653;
const VPY = -102;
const RADIALS = [790, 875, 958, 1060, 1153, 1241, 1319, 1393, 1465, 1531, 1591, 1653, 1708, 1762, 1818, 1872];
const LATERALS = [
  [807, 212], [732, 208], [668, 206], [612, 204], [563, 203], [519, 202], [480, 201], [446, 200],
  [415, 198], [386, 195], [359, 192], [336, 185], [315, 178], [294, 172], [276, 167], [260, 163],
  [245, 160], [231, 157], [218, 154], [206, 151], [194, 149], [183, 147],
];

const gridPath = [
  ...RADIALS.map((x) => {
    const k = (870 - VPY) / (283 - VPY);
    return `M${x} 283L${(VPX + (x - VPX) * k).toFixed(1)} 870`;
  }),
  ...LATERALS.map(([y, s]) => `M876 ${y}L1875 ${(y + s * 0.999).toFixed(1)}`),
].join("");

const RED_ARROWS = [
  [1169, 426, 1188, 429], [1162, 429, 1187, 433], [1168, 439, 1186, 442], [1159, 441, 1185, 445],
  [1173, 445, 1185, 448], [1169, 461, 1183, 463], [1170, 473, 1182, 475], [1155, 485, 1180, 489],
  [1163, 487, 1180, 489], [1162, 492, 1179, 495], [1160, 513, 1176, 516],
];
const FADED_ARROWS = [
  [1154, 552, 1178, 556], [1154, 571, 1168, 573], [1150, 575, 1168, 578], [1154, 578, 1167, 581],
  [1150, 595, 1165, 598], [1139, 603, 1163, 607], [1143, 626, 1160, 629], [1140, 641, 1158, 644],
  [1130, 652, 1156, 657], [1130, 658, 1156, 662],
];
const arrows = (list, c) =>
  list.map(([x, y, x2, y2], i) => (
    <g key={i}>
      <path d={`M${x + 5} ${y + 1}L${x2} ${y2}`} stroke={c} strokeWidth="1.800" />
      <path d={`M${x} ${y}l10-2-3 6z`} fill={c} />
    </g>
  ));

const Model = () => (
  <Scene viewBox="876 284 999 576" preserveAspectRatio="xMaxYMid slice" role="img" aria-label="Mesh view">
    <defs>
      <linearGradient id="bg" x1="0" y1="0" x2="0" y2="1">
        <stop offset="0" stopColor="#202020" />
        <stop offset="0.250" stopColor="#303030" />
        <stop offset="0.600" stopColor="#494949" />
        <stop offset="1" stopColor="#616161" />
      </linearGradient>
      <linearGradient id="front" gradientUnits="userSpaceOnUse" x1="1462" y1="480" x2="1437" y2="597">
        <stop offset="0" stopColor="#238023" />
        <stop offset="0.040" stopColor="#2a9a2a" />
        <stop offset="0.130" stopColor="#48f248" />
        <stop offset="0.690" stopColor="#48f248" />
        <stop offset="0.860" stopColor="#30ad30" />
        <stop offset="1" stopColor="#176017" />
      </linearGradient>
      <linearGradient id="mirror" gradientUnits="userSpaceOnUse" x1="1437" y1="600" x2="1403" y2="742">
        <stop offset="0" stopColor="#3c423c" />
        <stop offset="0.150" stopColor="#3f473f" />
        <stop offset="0.400" stopColor="#507d50" />
        <stop offset="0.550" stopColor="#578358" />
        <stop offset="0.880" stopColor="#5a865b" />
        <stop offset="0.900" stopColor="#4f804f" />
        <stop offset="1" stopColor="#4f804f" />
      </linearGradient>
      <linearGradient id="shine" x1="0" y1="0" x2="1" y2="0.300">
        <stop offset="0" stopColor="#7dff7d" stopOpacity="0.800" />
        <stop offset="1" stopColor="#48f248" stopOpacity="0" />
      </linearGradient>
      <linearGradient id="shineRight" x1="1" y1="0" x2="0" y2="0">
        <stop offset="0" stopColor="#7dff7d" stopOpacity="0.800" />
        <stop offset="1" stopColor="#48f248" stopOpacity="0" />
      </linearGradient>
      <filter id="soft" x="-50%" y="-50%" width="200%" height="200%">
        <feGaussianBlur stdDeviation="4" />
      </filter>
      <clipPath id="frontClip">
        <path d="M1190 427L1723 532L1698 646L1173 541Z" />
      </clipPath>
      <clipPath id="mirrorClip">
        <path d="M1180 553L1168 569L1154 677L1666 782L1690 682L1693 646L1173 541Z" />
      </clipPath>
    </defs>
    <rect x="476" y="284" width="1399" height="576" fill="url(#bg)" />
    <path d={gridPath} stroke="#2e2e2e" strokeWidth="1.300" fill="none" />
    <path d="M1180 545L1168 569L1154 677L1666 782L1690 682L1695 640Z" fill="url(#mirror)" />
    <path d={gridPath} stroke="#305c30" strokeWidth="1.300" fill="none" opacity="0.700" clipPath="url(#mirrorClip)" />
    {arrows(FADED_ARROWS, "#8c3a3a")}
    {arrows(RED_ARROWS, "#f01010")}
    <path d="M1210 407L1720 507L1723 533L1698 530L1190 428Z" fill="#238023" />
    <path d="M1190 427L1723 532L1698 646L1173 541Z" fill="url(#front)" />
    <g clipPath="url(#frontClip)">
      <g filter="url(#soft)">
        <path d="M1208 500l14 26 24 8 12-6 4-10-30-20z" fill="#48f248" />
        <path d="M1170 545l6-28 28-2 6 40z" fill="#1d701d" opacity="0.550" />
        <path d="M1254 538l36-8-6 40-34-6z" fill="#1d701d" opacity="0.450" />
        <path d="M1306 450l22 6-18 20z" fill="#2aa02a" opacity="0.700" />
        <path d="M1444 476l18 6-16 18z" fill="#2aa02a" opacity="0.500" />
        <path d="M1560 500l20 4v22z" fill="#2aa02a" opacity="0.500" />
        <path d="M1190 424l50 10 20 14-60-12z" fill="#2a9a2a" opacity="0.600" />
      </g>
      <path d="M1412 464l20 1 7 8 1 32-26-12z" fill="url(#shineRight)" />
    </g>
    <path d="M1305 479l23-23q12-6 22-5l-18 32z" fill="url(#shine)" />
    <path d="M1581 505l20-3-10 28-10 2z" fill="url(#shine)" />
    <path d="M1723 534h4M1725 537h3M1723 546h5M1721 553h4M1705 620h4M1704 627h5M1702 631h4" stroke="#1010e0" strokeWidth="1.800" />
    <path d="M1692 664h4M1692 670h5M1691 674h4M1689 684h5M1676 742h4M1673 753h4M1672 762h5" stroke="#33338a" strokeWidth="1.500" />

    <path d="M1806 786l2-22" stroke="#1be01b" strokeWidth="2" />
    <path d="M1805 772l3-14 3 14zM1805 754l3 4 3-4M1808 758v5" fill="#1be01b" stroke="#1be01b" />
    <circle cx="1833" cy="782" r="4.500" fill="#15d6dc" />
    <path d="M1791 789l4-6 18 2-2 6z" fill="#8d8d8d" />
    <circle cx="1805" cy="785" r="4" fill="#10b810" />
    <circle cx="1791" cy="794" r="4" fill="#c01010" />
    <circle cx="1815" cy="797" r="4" fill="#d01010" />
    <path d="M1791 789l19 2 2 18-21-2z" fill="#f0f0f0" />
    <circle cx="1801" cy="800" r="5" fill="#0b0bb0" />
    <path d="M1819 798l14 2" stroke="#f01010" strokeWidth="2" />
    <path d="M1828 797l14 5-14 2zM1840 799l5 6M1845 799l-5 6" fill="#f01010" stroke="#f01010" />
    <path d="M1794 808h6l-6 7h7" stroke="#2020f0" strokeWidth="1.500" fill="none" />
    <g fill="none" stroke="#f4f4f4" strokeWidth="2">
      <path d="M1851 798q1 14-7 26M1831 834q-8 7-20 8" />
    </g>
    <path d="M1848 804l1-10 5 9zM1815 838l-12 4 11 4z" fill="#f4f4f4" />
  </Scene>
);

/* ---------- page ---------- */

const MENU = [
  ["Domain", 93], ["Physics", 94], ["User-Defined", 140], ["Solution", 110], ["Results", 100],
  ["View", 78], ["Parallel", 102], ["Design", 90], ["Learning and Support", 168],
];

const QUICK = [
  ["solid", true, "Solid"], ["importMesh", false, "Import"], ["calcMesh", false, "Calculate"],
  ["sync", true, "Refresh"], ["bolt", false, "Update"], ["hex", false, "Workbench"],
  ["params", false, "Parameters"], ["monitor", false, "Monitors"],
];

const VIEWS = ["Mesh", "Scaled Residuals", "drag-rplot", "drag_force-rplot"];

export default function App() {
  return (
    <Shell>
      <GlobalStyle />
      <TitleBar>
        <Icon name="logo" w={16} />
        {"A:Fluid Flow (Fluent) Parallel Fluent@MSI  [3d, pbns, sstkw, 4-processes] [CFD Solver - Level 2, CFD Solver - Level 1, CFD Base]"}
        <WindowButtons>
          <button aria-label="Minimize">
            <Svg $w={11} $h={11} viewBox="0 0 11 11"><path d="M0 5.500h11" stroke="#777" /></Svg>
          </button>
          <button aria-label="Restore">
            <Svg $w={11} $h={11} viewBox="0 0 11 11">
              <path d="M.5 2.500h7.500v8H.5zM3 .5h5.500q2 0 2 2V8.500" stroke="#777" fill="none" />
            </Svg>
          </button>
        </WindowButtons>
      </TitleBar>

      <QuickBar>
        {QUICK.map(([icon, on, label]) => (
          <QuickButton key={icon} $on={on} aria-label={label}>
            <Icon name={icon} w={icon === "hex" ? 21 : 17} />
            {icon === "hex" && "WB"}
          </QuickButton>
        ))}
      </QuickBar>

      <TabBar>
        <MenuTab $w={80}><u>F</u>ile</MenuTab>
        {MENU.map(([name, w]) => (
          <MenuTab key={name} $w={w} $on={name === "Domain"}>{name}</MenuTab>
        ))}
        <CollapseRibbon aria-label="Collapse ribbon" />
        <BarRight>
          <Search aria-label="Quick Search" placeholder="Quick Search (Ctrl+F)" />
          <BarIcon $gap={18} aria-label="Help"><Icon name="helpBar" /></BarIcon>
          <BarIcon $gap={32} aria-label="Layout"><Icon name="layout" /></BarIcon>
          <AnsysBadge aria-label="Ansys">
            <Svg $w={20} $h={31} viewBox="0 0 20 31">
              <path d="M6 21l5-12h4l-5 12z" fill="#ffb71b" />
              <path d="M14 9h2l5 12h-4l-3.500-8z" fill="#fff" />
            </Svg>
          </AnsysBadge>
        </BarRight>
      </TabBar>

      <Ribbon>
        <Group $w={386}>
          <GroupTitle>Mesh</GroupTitle>
          <Columns>
            <Column $w={76}>
              <Command icon="sphere" label="Display..." />
              <Command icon="info" label="Info" arrow />
              <Command icon="units" label="Units..." />
            </Column>
            <Column $w={80}><Big icon="check" label="Check" gap={0} /></Column>
            <Column $w={66}><Big icon="quality" label="Quality" gap={8} /></Column>
            <Columns $pad={19}>
              <Column $w={115}>
                <Command icon="scale" label="Scale..." />
                <Command icon="transform" label="Transform" arrow />
                <Command icon="poly" label="Make Polyhedra" />
              </Column>
            </Columns>
          </Columns>
        </Group>
        <Group $w={376}>
          <GroupTitle>Zones</GroupTitle>
          <Columns $gap={19}>
            <Column $w={94}>
              <Command icon="combine" label="Combine" arrow />
              <Command icon="separate" label="Separate" arrow />
              <Command icon="adjacency" label="Adjacency..." />
            </Column>
            <Column $w={98}>
              <Command icon="del" label="Delete..." />
              <Command icon="deact" label="Deactivate..." />
              <Command icon="act" label="Activate..." />
            </Column>
            <Column $w={116}>
              <Command icon="append" label="Append" arrow />
              <Command icon="replaceMesh" label="Replace Mesh..." />
              <Command icon="replaceZone" label="Replace Zone..." />
            </Column>
          </Columns>
        </Group>
        <Group $w={111}>
          <GroupTitle>Interfaces</GroupTitle>
          <Columns>
            <Column $w={90} $gap={29} $top={9}>
              <Command icon="iface" label="Mesh..." />
              <Command icon="overset" label="Overset..." disabled />
            </Column>
          </Columns>
        </Group>
        <Group $w={149}>
          <GroupTitle>Mesh Models</GroupTitle>
          <Columns>
            <Column $w={124} $gap={29} $top={9}>
              <Command icon="dynmesh" label="Dynamic Mesh..." />
              <Command icon="gap" label="Gap Model..." />
            </Column>
          </Columns>
        </Group>
        <Group $w={473}>
          <GroupTitle>Turbomachinery</GroupTitle>
          <Columns $gap={20}>
            <Column $w={112}>
              <Tick><input type="checkbox" />Turbo Models</Tick>
              <Command icon="turboCreate" label="Turbo Create..." disabled />
            </Column>
            <Column $w={147}>
              <Command icon="perf" label="Turbo Performance..." disabled />
              <Command icon="spectral" label="Spectral Content" arrow disabled />
            </Column>
            <Column $w={144}>
              <Command icon="fan" label="Turbo Workflow" arrow />
              <Command icon="topology" label="Turbo Topology..." />
              <Command icon="fanOdd" label="Periodic Instancing..." />
            </Column>
          </Columns>
        </Group>
        <Group $w={228}>
          <GroupTitle>Adapt</GroupTitle>
          <Columns>
            <Column $w={104}>
              <Command icon="adapt" label="Manual..." />
              <Command icon="tools" label="Controls..." />
              <Command icon="sphere" label="Anisotropic Adaption..." />
            </Column>
            <Column $w={96}>
              <Command icon="adaptAuto" label="Automatic..." />
              <Command icon="manage" label="Manage..." />
            </Column>
          </Columns>
        </Group>
        <Group $w={112}>
          <GroupTitle>Surface</GroupTitle>
          <Columns>
            <Column $w={83} $gap={29} $top={9}>
              <Cmd>
                <Icon name="plus" />
                Create
                <Arrow $m="28px 0 0 auto" />
              </Cmd>
              <Command icon="manage" label="Manage..." />
            </Column>
          </Columns>
        </Group>
        <Group $w={20} />
      </Ribbon>

      <Work>
        <Outline>
          <PanelHead $h={28}>Outline View<Chevron /></PanelHead>
          <Band />
          <FilterInput aria-label="Filter" placeholder="Filter Text" />
          <TreeArea>
            <Tree>
              {TREE.map(([level, mark, icon, label, small], i) => (
                <TreeRow key={i} $level={level} $head={!icon} $h={!icon ? 18 : small ? 20 : 24}>
                  <Toggle $show={!!mark} disabled={!mark} aria-label={mark ? `Toggle ${label}` : undefined} aria-hidden={!mark}>
                    {mark && (
                      <Svg $w={7} $h={7} viewBox="0 0 7 7">
                        <path d={mark === "+" ? "M0 3.500h7M3.500 0v7" : "M0 3.500h7"} stroke="#c8c8c8" strokeWidth="2" />
                      </Svg>
                    )}
                  </Toggle>
                  {icon && <Icon name={icon} w={small ? 12 : 19} />}
                  {label}
                </TreeRow>
              ))}
            </Tree>
            <ScrollTrack>
              <ScrollUp aria-label="Scroll up" />
              <ScrollThumb />
            </ScrollTrack>
          </TreeArea>
        </Outline>

        <RightSide>
          <Upper>
            <TaskPage>
              <PanelHead $h={26}>Task Page<Chevron /></PanelHead>
              <TaskBody>
                <TaskTitle>
                  Reference Values
                  <button aria-label="Help"><Icon name="help" /></button>
                </TaskTitle>
                <FieldLabel htmlFor="compute">Compute from</FieldLabel>
                <SelectBox $pad={6}>
                  <select id="compute" defaultValue="inlet"><option>inlet</option></select>
                  <SelectArrow />
                </SelectBox>
                <BoxTitle id="refvals">Reference Values</BoxTitle>
                <ValueBox role="group" aria-labelledby="refvals">
                  {VALUES.map(([label, value], i) => (
                    <ValueRow key={label}>
                      <label htmlFor={`value-${i}`}>{label}</label>
                      <input id={`value-${i}`} defaultValue={value} />
                    </ValueRow>
                  ))}
                </ValueBox>
                <FieldLabel htmlFor="zone">Reference Zone</FieldLabel>
                <SelectBox $pad={2}>
                  <select id="zone" defaultValue="water"><option>water</option></select>
                  <SelectArrow />
                </SelectBox>
              </TaskBody>
            </TaskPage>

            <Stage>
              <StageTop>
                <ToolStrip>
                  {TOOLS.map(([name, size], i) =>
                    name === "grip" ? (
                      <GripDots key={i} />
                    ) : (
                      <ToolButton key={i} $on={name === "cursor"} aria-label={name}>
                        <Icon name={name} w={size} h={size > 23 ? 20 : size} />
                      </ToolButton>
                    )
                  )}
                </ToolStrip>
                <View>
                  <ViewTabs>
                    {VIEWS.map((name, i) => (
                      <ViewTab key={name} $on={i === 0}>
                        <TabShape viewBox="0 0 251 35" aria-hidden="true">
                          <path
                            d="M0 34L9 7q2-4 6-4h220q5 0 7 5L250 34"
                            fill="#212121"
                            stroke={i === 0 ? "#7cc4ff" : "#f4f4f4"}
                            strokeWidth="1.200"
                          />
                        </TabShape>
                        <TabIcon><Icon name={i === 0 ? "logo" : "logoGrey"} /></TabIcon>
                        <TabName>{name}</TabName>
                        <CloseTab aria-label={`Close ${name}`}>
                          <Svg $w={11} $h={11} viewBox="0 0 11 11">
                            <path d="M.5 .5l10 10M10.500 .5l-10 10" stroke="#b0b0b0" strokeWidth="1.800" />
                          </Svg>
                        </CloseTab>
                      </ViewTab>
                    ))}
                  </ViewTabs>
                  <Canvas>
                    <Model />
                    <Brand>
                      <BrandName>Ansys</BrandName>
                      <BrandYear>2024 R2</BrandYear>
                      <BrandEdition>STUDENT</BrandEdition>
                    </Brand>
                  </Canvas>
                </View>
              </StageTop>
              <SelectBar>
                <GripDots v />
                <label htmlFor="selected">0 selected</label>
                <input id="selected" defaultValue="all" />
              </SelectBar>
            </Stage>
          </Upper>

          <Console>
            <PanelHead $h={26}>Console</PanelHead>
            <ConsoleText>
              <pre>{"   omega\n   hyb_init-0\n   hyb_init-1\nDone.\n\nCalculation complete."}</pre>
            </ConsoleText>
            <Alerts>
              <Warn aria-label="Warnings">
                <Svg $w={18} $h={16} viewBox="0 0 18 16">
                  <path d="M9 1.500L16.500 15h-15zM9 6v5M9 12.200v1.300" stroke="#8a8420" strokeWidth="1.300" fill="none" />
                </Svg>
              </Warn>
              <AlertEdge aria-label="More" />
            </Alerts>
          </Console>
        </RightSide>
      </Work>
    </Shell>
  );
}
